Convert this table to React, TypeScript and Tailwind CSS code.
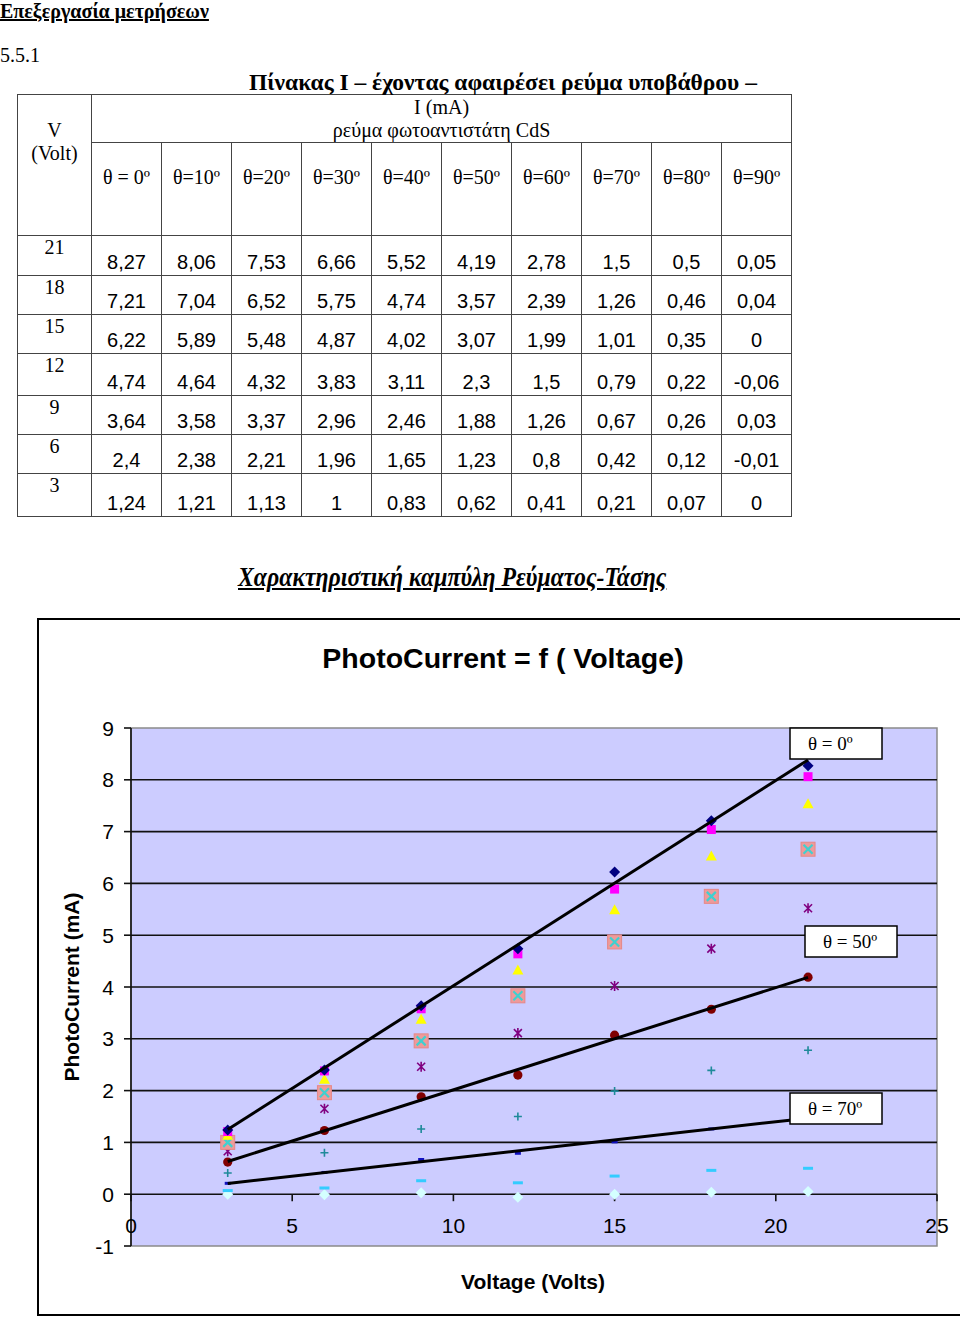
import React from 'react';

const rows: { v: number; vals: string[] }[] = [
  { v: 21, vals: ['8,27', '8,06', '7,53', '6,66', '5,52', '4,19', '2,78', '1,5', '0,5', '0,05'] },
  { v: 18, vals: ['7,21', '7,04', '6,52', '5,75', '4,74', '3,57', '2,39', '1,26', '0,46', '0,04'] },
  { v: 15, vals: ['6,22', '5,89', '5,48', '4,87', '4,02', '3,07', '1,99', '1,01', '0,35', '0'] },
  { v: 12, vals: ['4,74', '4,64', '4,32', '3,83', '3,11', '2,3', '1,5', '0,79', '0,22', '-0,06'] },
  { v: 9, vals: ['3,64', '3,58', '3,37', '2,96', '2,46', '1,88', '1,26', '0,67', '0,26', '0,03'] },
  { v: 6, vals: ['2,4', '2,38', '2,21', '1,96', '1,65', '1,23', '0,8', '0,42', '0,12', '-0,01'] },
  { v: 3, vals: ['1,24', '1,21', '1,13', '1', '0,83', '0,62', '0,41', '0,21', '0,07', '0'] },
];

const rowHeights = ['h-[40px]', 'h-[39px]', 'h-[39px]', 'h-[42px]', 'h-[39px]', 'h-[39px]', 'h-[43px]'];

const angles = ['θ = 0º', 'θ=10º', 'θ=20º', 'θ=30º', 'θ=40º', 'θ=50º', 'θ=60º', 'θ=70º', 'θ=80º', 'θ=90º'];

const num = (s: string) => parseFloat(s.replace(',', '.'));

// plot geometry (svg coords)
const X0 = 43;
const XS = 32.24;
const Y0 = 19;
const YS = 51.8;
const px = (v: number) => X0 + v * XS;
const py = (v: number) => Y0 + (9 - v) * YS;

function series(i: number) {
  return rows.map((r) => ({ x: r.v, y: num(r.vals[i]) }));
}

function fit(i: number) {
  const pts = series(i);
  const n = pts.length;
  const mx = pts.reduce((a, p) => a + p.x, 0) / n;
  const my = pts.reduce((a, p) => a + p.y, 0) / n;
  let sxy = 0;
  let sxx = 0;
  pts.forEach((p) => {
    sxy += (p.x - mx) * (p.y - my);
    sxx += (p.x - mx) * (p.x - mx);
  });
  const k = sxy / sxx;
  const b = my - k * mx;
  return { x1: px(3), y1: py(3 * k + b), x2: px(21), y2: py(21 * k + b) };
}

function Marker({ kind, x, y }: { kind: number; x: number; y: number }) {
  switch (kind) {
    case 0:
      return <polygon points={`${x},${y - 5.5} ${x + 5.5},${y} ${x},${y + 5.5} ${x - 5.5},${y}`} fill="#000080" />;
    case 1:
      return <rect x={x - 4.5} y={y - 4.5} width={9} height={9} fill="#ff00ff" />;
    case 2:
      return <polygon points={`${x},${y - 6} ${x + 5.5},${y + 4} ${x - 5.5},${y + 4}`} fill="#ffff00" />;
    case 3:
      return (
        <g>
          <rect x={x - 7} y={y - 7} width={14} height={14} fill="#ee9a9a" stroke="#e58888" strokeWidth={1} />
          <path d={`M${x - 4.5} ${y - 4.5} L${x + 4.5} ${y + 4.5} M${x + 4.5} ${y - 4.5} L${x - 4.5} ${y + 4.5}`} stroke="#3fd0d0" strokeWidth={2.2} />
        </g>
      );
    case 4:
      return (
        <path
          d={`M${x - 4} ${y - 4} L${x + 4} ${y + 4} M${x + 4} ${y - 4} L${x - 4} ${y + 4} M${x} ${y - 5} L${x} ${y + 5}`}
          stroke="#800080"
          strokeWidth={1.6}
        />
      );
    case 5:
      return <circle cx={x} cy={y} r={4.6} fill="#800000" />;
    case 6:
      return <path d={`M${x - 4} ${y} L${x + 4} ${y} M${x} ${y - 4} L${x} ${y + 4}`} stroke="#1f8a9a" strokeWidth={1.6} />;
    case 7:
      return <path d={`M${x - 3} ${y} L${x + 3} ${y}`} stroke="#1010c0" strokeWidth={3} />;
    case 8:
      return <path d={`M${x - 5} ${y} L${x + 5} ${y}`} stroke="#33ccff" strokeWidth={3} />;
    default:
      return (
        <polygon
          points={`${x},${y - 5.5} ${x + 5.5},${y} ${x},${y + 5.5} ${x - 5.5},${y}`}
          fill="#d4ffff"
        />
      );
  }
}

function Plot() {
  const grid = [0, 1, 2, 3, 4, 5, 6, 7, 8];
  const yTicks = [9, 8, 7, 6, 5, 4, 3, 2, 1, 0, -1];
  const xTicks = [0, 5, 10, 15, 20, 25];
  const fits = [fit(0), fit(5), fit(7)];
  const boxes = [
    { x: 702, y: 19, label: 'θ = 0º' },
    { x: 717, y: 217, label: 'θ = 50º' },
    { x: 702, y: 384, label: 'θ = 70º' },
  ];

  return (
    <svg width={872} height={555} className="block shrink-0">
      <rect x={X0} y={py(9)} width={px(25) - X0} height={py(-1) - py(9)} fill="#ccccff" stroke="#8a8a8a" strokeWidth={1.5} />
      {grid.map((g) => (
        <line key={g} x1={X0} x2={px(25)} y1={py(g)} y2={py(g)} stroke="#111" strokeWidth={1.6} />
      ))}
      <line x1={X0} x2={X0} y1={py(9)} y2={py(-1)} stroke="#111" strokeWidth={1.6} />
      {yTicks.map((t) => (
        <g key={t}>
          <line x1={X0 - 7} x2={X0} y1={py(t)} y2={py(t)} stroke="#111" strokeWidth={1.6} />
          <text x={26} y={py(t) + 7.5} textAnchor="end" fontSize={21} fontFamily="'Liberation Sans', Arial, sans-serif" fill="#000">
            {t}
          </text>
        </g>
      ))}
      {xTicks.map((t) => (
        <g key={t}>
          <line x1={px(t)} x2={px(t)} y1={py(0)} y2={py(0) + 7} stroke="#111" strokeWidth={1.6} />
          <text x={px(t)} y={py(-0.6) + 7.5} textAnchor="middle" fontSize={21} fontFamily="'Liberation Sans', Arial, sans-serif" fill="#000">
            {t}
          </text>
        </g>
      ))}
      {[9, 8, 7, 6, 5, 4, 3, 2, 1, 0].map((i) =>
        series(i).map((p) => <Marker key={`${i}-${p.x}`} kind={i} x={px(p.x)} y={py(p.y)} />),
      )}
      {fits.map((f, i) => (
        <line key={i} x1={f.x1} y1={f.y1} x2={f.x2} y2={f.y2} stroke="#000" strokeWidth={3} />
      ))}
      {boxes.map((b) => (
        <g key={b.label}>
          <rect x={b.x} y={b.y} width={92} height={31} fill="#fff" stroke="#000" strokeWidth={1.5} />
          <text x={b.x + 18} y={b.y + 22} fontSize={19} fontFamily="'Liberation Serif', 'Times New Roman', serif" fill="#000">
            {b.label}
          </text>
        </g>
      ))}
    </svg>
  );
}

export default function App() {
  return (
    <div className="w-[960px] h-[1319px] overflow-hidden bg-white text-black font-['Liberation_Serif','Times_New_Roman',serif]">
      <div className="text-[20px] leading-[22px] font-bold underline">Επεξεργασία μετρήσεων</div>
      <div className="mt-[22px] text-[20px] leading-[22px]">5.5.1</div>
      <div className="mt-[4px] pl-[249px] text-[23.5px] leading-[24px] font-bold whitespace-nowrap">
        Πίνακας Ι – έχοντας αφαιρέσει ρεύμα υποβάθρου –
      </div>

      {/* measurements table */}
      <table className="ml-[17px] w-[774px] table-fixed border-collapse">
        <colgroup>
          <col className="w-[74px]" />
          {angles.map((a) => (
            <col key={a} className="w-[70px]" />
          ))}
        </colgroup>
        <thead>
          <tr className="h-[48px]">
            <th rowSpan={2} className="border border-[#444] align-top pt-[24px] text-[20px] leading-[23px] font-normal">
              V
              <br />
              (Volt)
            </th>
            <th colSpan={10} className="border border-[#444] align-top pt-[1px] text-[20px] leading-[23px] font-normal">
              I (mA)
              <br />
              ρεύμα φωτοαντιστάτη CdS
            </th>
          </tr>
          <tr className="h-[93px]">
            {angles.map((a) => (
              <th key={a} className="border border-[#444] align-top pt-[23px] text-[20px] leading-[23px] font-normal whitespace-nowrap">
                {a}
              </th>
            ))}
          </tr>
        </thead>
        <tbody>
          {rows.map((r, ri) => (
            <tr key={r.v} className={rowHeights[ri]}>
              <td className="border border-[#444] align-top text-center text-[20px] leading-[23px] p-0">{r.v}</td>
              {r.vals.map((val, i) => (
                <td
                  key={i}
                  className="border border-[#444] align-bottom text-center p-0 pb-[1px] text-[20px] leading-[23px] font-['Liberation_Sans',Arial,sans-serif]"
                >
                  {val}
                </td>
              ))}
            </tr>
          ))}
        </tbody>
      </table>

      <div className="mt-[46px] pl-[238px] leading-[28px] whitespace-nowrap">
        <span className="inline-block origin-left scale-x-[0.88] text-[27px] font-bold italic underline">
          Χαρακτηριστική καμπύλη Ρεύματος-Τάσης
        </span>
      </div>

      {/* chart */}
      <div className="mt-[23px] ml-[37px] w-[930px] h-[698px] border-t-2 border-l-2 border-b-2 border-black font-['Liberation_Sans',Arial,sans-serif]">
        <div className="h-[89px] pt-[22px] text-center text-[28.5px] leading-[32px] font-bold">PhotoCurrent = f ( Voltage)</div>
        <div className="flex">
          <div className="w-[49px] h-[555px] pl-[18px] flex items-center justify-center">
            <span className="shrink-0 -rotate-90 whitespace-nowrap text-[21px] leading-[24px] font-bold">PhotoCurrent (mA)</span>
          </div>
          <Plot />
        </div>
        <div className="mt-[5px] pl-[60px] text-center text-[21px] leading-[26px] font-bold">Voltage (Volts)</div>
      </div>
    </div>
  );
}
